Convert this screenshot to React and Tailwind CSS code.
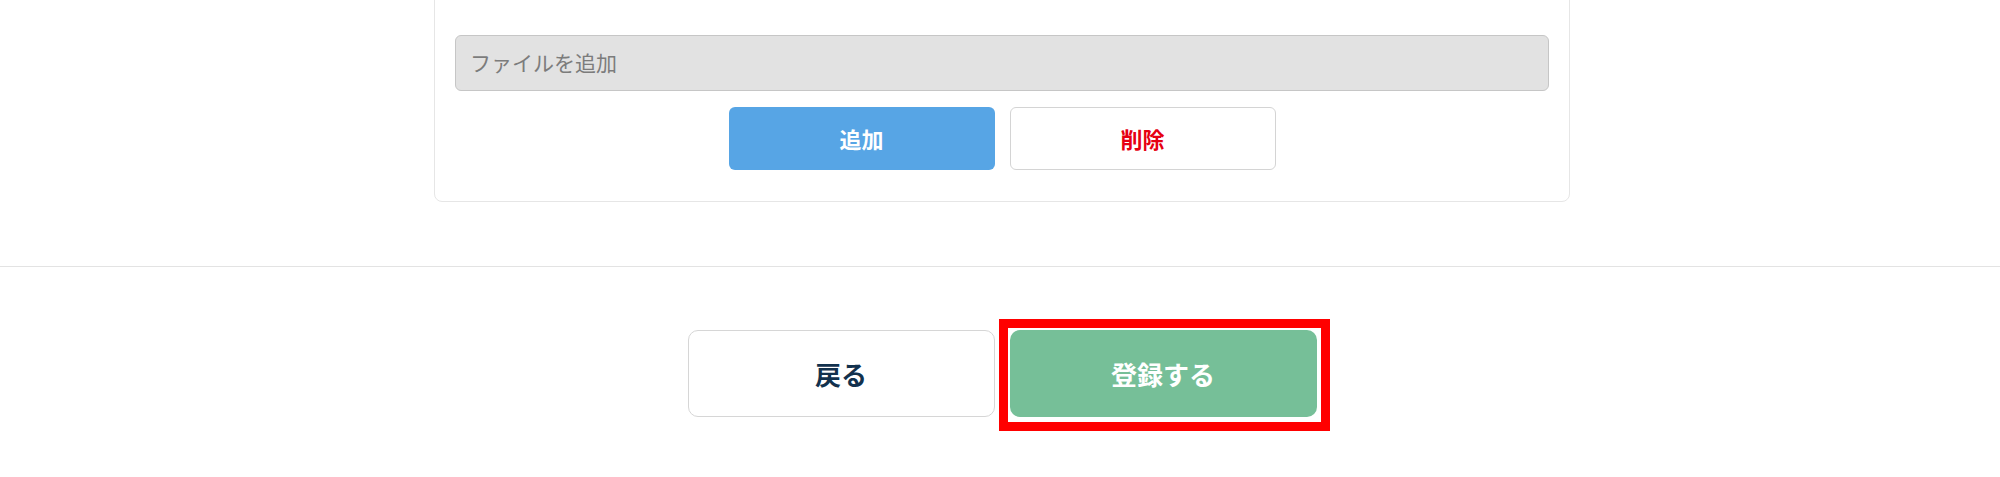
import React from 'react';

const font = { fontFamily: '"Noto Sans CJK JP", "Noto Sans", sans-serif' };

export default function App() {
  return (
    <div className="w-[2000px] h-[477px] bg-white overflow-hidden" style={font}>
      <div className="flex justify-center pl-[4px]">
        <div className="w-[1136px] -mt-[10px] border border-[#e6e6e6] rounded-[8px] pt-[44px] pb-[31px] px-[20px]">
          <div className="h-[56px] bg-[#e2e2e2] border border-[#c6c6c6] rounded-[6px] px-[14px] flex items-center text-[21px] text-[#7c7c7c]">
            ファイルを追加
          </div>
          <div className="mt-[16px] flex justify-center gap-[15px]">
            <button className="w-[266px] h-[63px] rounded-[6px] bg-[#57a5e5] text-white font-bold text-[22px]">追加</button>
            <button className="w-[266px] h-[63px] rounded-[6px] border border-[#d4d4d4] bg-white text-[#e60012] font-bold text-[22px]">削除</button>
          </div>
        </div>
      </div>

      <div className="mt-[64px] border-t border-[#e3e3e3]" />

      <div className="mt-[63px] flex justify-center gap-[15px] pl-[4px]">
        <button className="w-[307px] h-[87px] rounded-[10px] border border-[#d6d6d6] bg-white text-[#12314d] font-bold text-[26px]">戻る</button>
        <div className="relative">
          <button className="w-[307px] h-[87px] rounded-[10px] bg-[#76bf98] text-white font-bold text-[26px]">登録する</button>
          <div className="absolute -left-[11px] -top-[11px] w-[331px] h-[112px] border-[9px] border-[#ff0000] pointer-events-none" />
        </div>
      </div>
    </div>
  );
}
